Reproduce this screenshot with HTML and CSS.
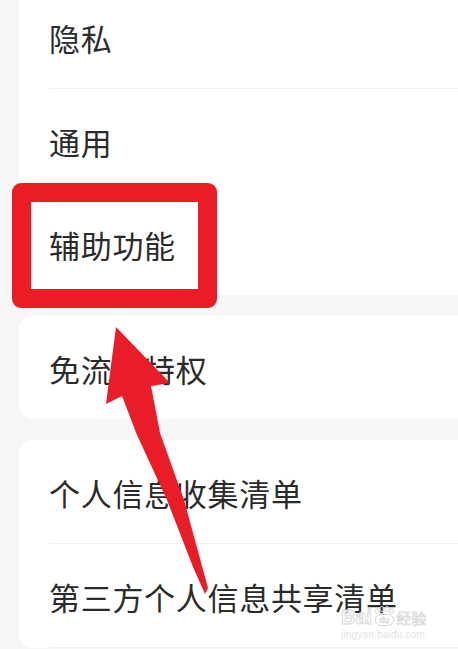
FILE: index.html
```html
<!DOCTYPE html>
<html lang="zh-CN">
<head>
  <meta charset="UTF-8">
  <meta name="viewport" content="width=device-width, initial-scale=1.0">
  <title>设置</title>
  <link rel="stylesheet" href="styles.css">
</head>
<body>
  <div class="page">
    <div class="card">
      <div class="row">隐私</div>
      <div class="row no-line">通用</div>
      <div class="row no-line">辅助功能</div>
    </div>
    <div class="card">
      <div class="row no-line">免流量特权</div>
    </div>
    <div class="card">
      <div class="row">个人信息收集清单</div>
      <div class="row">第三方个人信息共享清单</div>
    </div>
  </div>

  <!-- annotation overlay -->
  <div class="mark"></div>
  <svg class="arrow" width="458" height="649" viewBox="0 0 458 649">
    <polygon points="116,327 170,383 151,386 160,433 184,500 208,588 205,594 193,567 167,500 137,435 122,396 106,404" fill="#e91d27"/>
  </svg>

  <div class="watermark">
    <div class="wm-logo">
      <span class="wm-bai">Bai</span>
      <span class="wm-paw">
        <svg width="20" height="8" viewBox="0 0 20 8">
          <ellipse cx="3" cy="5" rx="2" ry="2.5" fill="none" stroke="#d4d4d4"/>
          <ellipse cx="8" cy="3" rx="2" ry="2.5" fill="none" stroke="#d4d4d4"/>
          <ellipse cx="13" cy="3" rx="2" ry="2.5" fill="none" stroke="#d4d4d4"/>
          <ellipse cx="17.5" cy="5" rx="2" ry="2.5" fill="none" stroke="#d4d4d4"/>
        </svg>
        <span class="wm-du">du</span>
      </span>
      <span class="wm-jy">经验</span>
    </div>
    <div class="wm-url">jingyan.baidu.com</div>
  </div>
</body>
</html>
```

FILE: styles.css
```css
html, body {
  margin: 0;
  padding: 0;
  height: 100%;
  overflow: hidden;
}
body {
  background-color: #f5f6f8;
  color: #2b2b2b;
  font-family: "Noto Sans CJK SC", "Noto Sans", sans-serif;
  position: relative;
}
.page {
  display: flex;
  flex-direction: column;
  gap: 21px;
  margin-top: -15px;
  padding-left: 19px;
  margin-right: -30px;
}
.card {
  background: #fff;
  border-radius: 14px;
}
.row {
  margin-left: 30px;
  padding: 37px 0 35px;
  font-size: 31px;
  line-height: 31px;
  letter-spacing: 0.7px;
  border-bottom: 1px solid #ededed;
}
.row.no-line {
  border-bottom: none;
}
.mark {
  position: absolute;
  left: 12px;
  top: 183px;
  width: 205px;
  height: 125px;
  box-sizing: border-box;
  border: 19px solid #ec1c26;
  border-radius: 9px;
}
.arrow {
  position: absolute;
  left: 0;
  top: 0;
}
.watermark {
  position: absolute;
  left: 341px;
  top: 606px;
  width: 94px;
}
.wm-logo {
  display: flex;
  align-items: flex-end;
  height: 20px;
}
.wm-bai {
  font-family: "Liberation Sans", sans-serif;
  font-weight: bold;
  font-size: 20px;
  line-height: 18px;
  color: rgba(255, 255, 255, 0.85);
  -webkit-text-stroke: 0.8px #d2d2d2;
}
.wm-paw {
  display: flex;
  flex-direction: column;
  align-items: center;
  margin: 0 2px;
}
.wm-paw svg {
  display: block;
}
.wm-du {
  font-family: "Liberation Sans", sans-serif;
  font-weight: bold;
  font-size: 9px;
  line-height: 10px;
  padding: 0 3px;
  border: 1px solid #d4d4d4;
  border-radius: 6px;
  color: rgba(255, 255, 255, 0.9);
  -webkit-text-stroke: 0.5px #cfcfcf;
}
.wm-jy {
  font-size: 15px;
  line-height: 17px;
  color: rgba(255, 255, 255, 0.85);
  -webkit-text-stroke: 0.6px #d0d0d0;
}
.wm-url {
  margin-top: 3px;
  font-family: "Liberation Sans", sans-serif;
  font-size: 10px;
  line-height: 11px;
  color: #e2e2e2;
  letter-spacing: 0.2px;
}
```
